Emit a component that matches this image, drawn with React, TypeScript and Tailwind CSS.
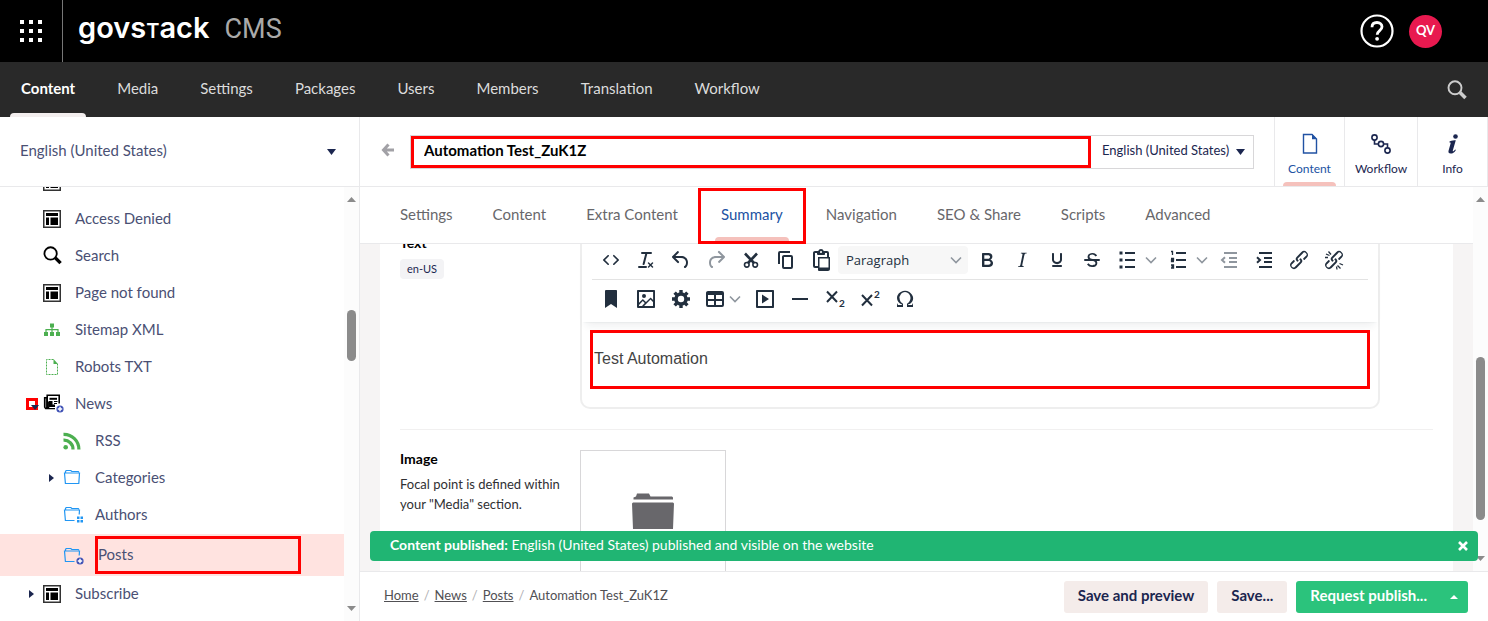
import React from "react";

type IconProps = { className?: string };

const toolPaths = {
  code: "M9.8 15.7c.3.3.3.8 0 1-.3.4-.9.4-1.2 0l-4.4-4.1a.8.8 0 0 1 0-1.2l4.4-4.2c.3-.3.9-.3 1.2 0 .3.3.3.8 0 1.1L6 12l3.8 3.7zM14.2 15.7c-.3.3-.3.8 0 1 .4.4.9.4 1.2 0l4.4-4.1c.3-.3.3-.9 0-1.2l-4.4-4.2a.8.8 0 0 0-1.2 0c-.3.3-.3.8 0 1.1L18 12l-3.8 3.7z",
  clear: "M13.2 6a1 1 0 0 1 0 .2l-2.6 10a1 1 0 0 1-1 .8h-.2a.8.8 0 0 1-.8-1l2.6-10H8a1 1 0 1 1 0-2h9a1 1 0 0 1 0 2h-3.8zM5 18h7a1 1 0 0 1 0 2H5a1 1 0 0 1 0-2zm13 1.5L16.5 18 15 19.5a.7.7 0 0 1-1-1l1.5-1.5-1.5-1.5a.7.7 0 0 1 1-1l1.5 1.5 1.5-1.5a.7.7 0 0 1 1 1L17.5 17l1.5 1.5a.7.7 0 0 1-1 1z",
  undo: "M6.4 8H12c3.7 0 6.2 2 6.8 5.1.6 2.7-.4 5.6-2.3 6.8a1 1 0 0 1-1-1.8c1.1-.6 1.8-2.7 1.4-4.6-.5-2.1-2.1-3.5-4.9-3.5H6.4l3.3 3.3a1 1 0 1 1-1.4 1.4l-5-5a1 1 0 0 1 0-1.4l5-5a1 1 0 0 1 1.4 1.4L6.4 8z",
  redo: "M17.6 10H12c-2.8 0-4.4 1.4-4.9 3.5-.4 2 .3 4 1.4 4.6a1 1 0 1 1-1 1.8c-2-1.2-2.9-4.1-2.3-6.8.6-3 3-5.1 6.8-5.1h5.6l-3.3-3.3a1 1 0 1 1 1.4-1.4l5 5a1 1 0 0 1 0 1.4l-5 5a1 1 0 0 1-1.4-1.4l3.3-3.3z",
  copy: "M16 3H6a2 2 0 0 0-2 2v11h2V5h10V3zm1 4a2 2 0 0 1 2 2v10a2 2 0 0 1-2 2h-7a2 2 0 0 1-2-2V9c0-1.2.9-2 2-2h7zm0 12V9h-7v10h7z",
  paste: "M18 9V5h-2v1c0 .6-.4 1-1 1H9a1 1 0 0 1-1-1V5H6v13h3V9h9zM9 20H6a2 2 0 0 1-2-2V5c0-1.1.9-2 2-2h3.2A3 3 0 0 1 12 1a3 3 0 0 1 2.8 2H18a2 2 0 0 1 2 2v4h1v12c0 1.1-.9 2-2 2h-9a1 1 0 0 1-1-1v-2zm1.5-9.5v9h9v-9h-9zM12 3a1 1 0 0 0-1 1c0 .5.4 1 1 1s1-.5 1-1-.4-1-1-1z",
  bold: "M7.8 19c-.3 0-.5 0-.6-.2l-.2-.5V5.7c0-.2 0-.4.2-.5l.6-.2h5c1.5 0 2.7.3 3.5 1 .7.6 1.1 1.4 1.1 2.5a3 3 0 0 1-.6 1.9c-.4.6-1 1-1.6 1.2.4.1.9.3 1.3.6s.8.7 1 1.2c.4.4.5 1 .5 1.6 0 1.3-.4 2.3-1.3 3-.8.7-2.1 1-3.8 1H7.8zm5-8.3c.6 0 1.2-.1 1.6-.5.4-.3.6-.7.6-1.3 0-1.1-.8-1.7-2.3-1.7H9.3v3.5h3.4zm.5 6c.7 0 1.3-.1 1.7-.4.4-.4.6-.9.6-1.5s-.2-1-.7-1.4c-.4-.3-1-.4-2-.4H9.4v3.8h4z",
  italic: "M16.7 4.7l-.1.9h-.3c-.6 0-1 0-1.4.3-.3.3-.4.6-.5 1.1l-2.1 9.8v.6c0 .5.4.8 1.4.8h.2l-.2.8H8l.2-.8h.2c1.1 0 1.8-.5 2-1.5l2-9.8.1-.5c0-.6-.4-.8-1.4-.8h-.3l.2-.9h5.8z",
  underline: "M16 5c.6 0 1 .4 1 1v5.5a4 4 0 0 1-.4 1.8l-1 1.4a5.3 5.3 0 0 1-5.5 1 5 5 0 0 1-1.6-1c-.5-.4-.8-.9-1.1-1.4a4 4 0 0 1-.4-1.8V6c0-.6.4-1 1-1s1 .4 1 1v5.500c0 .3 0 .6.2 1l.6.7a3.300 3.300 0 0 0 2.200.8 3.400 3.400 0 0 0 2.200-.8c.3-.2.4-.5.6-.8l.2-.9V6c0-.6.4-1 1-1zM8 17h8c.6 0 1 .4 1 1s-.4 1-1 1H8a1 1 0 0 1 0-2z",
  strike: "M15.6 8.5c-.5-.7-1-1.1-1.3-1.3-.6-.4-1.3-.6-2-.6-2.7 0-2.8 1.7-2.8 2.1 0 1.6 1.8 2 3.2 2.3 4.4.9 4.6 2.8 4.6 3.9 0 1.4-.7 4.1-5 4.1A6.2 6.2 0 0 1 7 16.4l1.5-1.1c.4.6 1.6 2 3.7 2 1.6 0 2.5-.4 3-1.2.4-.8.3-2-.8-2.6-.7-.4-1.6-.7-2.9-1-1-.2-3.9-.8-3.9-3.6C7.6 6 10.3 5 12.4 5c2.9 0 4.2 1.6 4.7 2.4l-1.5 1.1zM5 11h14a1 1 0 0 1 0 2H5a1 1 0 0 1 0-2z",
  link: "M6.2 12.3a1 1 0 0 1 1.4 1.4l-2 2a2 2 0 1 0 2.6 2.8l4.8-4.8a1 1 0 0 0 0-1.4 1 1 0 1 1 1.4-1.3 2.9 2.9 0 0 1 0 4L9.6 20a3.9 3.9 0 0 1-5.5-5.5l2-2zm11.6-.6a1 1 0 0 1-1.4-1.4l2.1-2a2 2 0 1 0-2.7-2.8L11 10.3a1 1 0 0 0 0 1.4A1 1 0 1 1 9.6 13a2.9 2.9 0 0 1 0-4L14.4 4a3.9 3.9 0 0 1 5.5 5.5l-2 2z",
  bookmark: "M6 4v17l6-4 6 4V4c0-.6-.4-1-1-1H7a1 1 0 0 0-1 1z",
  image: "M5 15.7l3.3-3.2c.3-.3.7-.3 1 0L12 15l4.1-4c.3-.4.8-.4 1 0l2 1.9V5H5v10.7zM5 18V19h3l2.8-2.9-2-2L5 17.9zm14-3l-2.5-2.4-6.4 6.5H19v-4zM4 3h16c.6 0 1 .4 1 1v16c0 .6-.4 1-1 1H4a1 1 0 0 1-1-1V4c0-.6.4-1 1-1zm6 8a2 2 0 1 0 0-4 2 2 0 0 0 0 4z",
  table: "M19 4a2 2 0 0 1 2 2v12a2 2 0 0 1-2 2H5a2 2 0 0 1-2-2V6c0-1.1.9-2 2-2h14zM5 14v4h6v-4H5zm14 0h-6v4h6v-4zm0-6h-6v4h6V8zM5 12h6V8H5v4z",
  media: "M4 3h16c.6 0 1 .4 1 1v16c0 .6-.4 1-1 1H4a1 1 0 0 1-1-1V4c0-.6.4-1 1-1zm1 2v14h14V5H5zM9 7.500l7 4.500-7 4.500z",
  rule: "M4 11h16v2H4z",
  omega: "M15 18h4l1-2v4h-6v-3.300l1.400-1a6 6 0 0 0 1.800-2.900 6.300 6.300 0 0 0-.1-4.100 5.800 5.800 0 0 0-3-3.200c-.6-.3-1.300-.5-2.100-.5a5.100 5.100 0 0 0-3.900 1.800 6.300 6.300 0 0 0-1.300 6 6.200 6.200 0 0 0 1.800 3l1.400.9V20H4v-4l1 2h4v-.5l-2-1L5.400 15A6.500 6.500 0 0 1 4 11c0-1 .2-1.900.6-2.700A7 7 0 0 1 7.800 5a8.300 8.300 0 0 1 8.500 0c1 .7 1.900 1.500 2.500 2.500a6.600 6.600 0 0 1 .3 7.300 6.800 6.800 0 0 1-2 2l-2.100.7v.5z",
};

function PathIcon({ name }: { name: keyof typeof toolPaths }) {
  return (
    <svg viewBox="0 0 24 24" className="size-6 shrink-0" fill="currentColor" aria-hidden="true">
      <path d={toolPaths[name]} fillRule={name === "strike" ? "nonzero" : "evenodd"} />
    </svg>
  );
}

function Stroke({ children }: { children: React.ReactNode }) {
  return (
    <svg viewBox="0 0 24 24" className="size-6 shrink-0" fill="none" stroke="currentColor" strokeWidth="2" aria-hidden="true">
      {children}
    </svg>
  );
}

function CutIcon() {
  return (
    <Stroke>
      <path d="M6 5.500l9 9.500M18 5.500L9 15" strokeWidth="2.600" />
      <circle cx="7.800" cy="16.800" r="2.300" strokeWidth="1.600" />
      <circle cx="16.200" cy="16.800" r="2.300" strokeWidth="1.600" />
    </Stroke>
  );
}

function GearIcon() {
  return (
    <svg viewBox="0 0 24 24" className="size-6 shrink-0" aria-hidden="true">
      <circle cx="12" cy="12" r="5" fill="none" stroke="currentColor" strokeWidth="3.600" />
      <g stroke="currentColor" strokeWidth="3.400">
        <path d="M12 3v3M12 18v3M3 12h3M18 12h3M5.600 5.600l2.200 2.200M16.200 16.200l2.200 2.200M5.600 18.400l2.200-2.200M16.200 7.800l2.200-2.200" />
      </g>
    </svg>
  );
}

function BulletIcon() {
  return (
    <Stroke>
      <path d="M10 5h10M10 12h10M10 19h10" />
      <path d="M4.500 5h3M4.500 12h3M4.500 19h3" strokeWidth="3" />
    </Stroke>
  );
}

function NumberIcon() {
  return (
    <Stroke>
      <path d="M10 5h10M10 12h10M10 19h10" />
      <path d="M5 3.500h1.500V7M5 10.500h2.500v1.500H5.500v1.500h2.500M5 17h2.500v3H5M5.500 18.500h2" strokeWidth="1.300" />
    </Stroke>
  );
}

function DentIcon({ out }: { out?: boolean }) {
  return (
    <Stroke>
      <path d="M7 5h13M12 10h8M12 14h8M7 19h13" />
      <path d={out ? "M8 9.200L5 12l3 2.800" : "M5 9.200L8 12l-3 2.800"} />
    </Stroke>
  );
}

function UnlinkIcon() {
  return (
    <svg viewBox="0 0 24 24" className="size-6 shrink-0" fill="currentColor" aria-hidden="true">
      <path d={toolPaths.link} />
      <path d="M4 6l3.500 1.500M6.500 3.500L9 6.500M3 9.500l3 0M15.500 17.500l3 3M17.500 15.500l3.500 1.500M14.500 18.500l.5 3" fill="none" stroke="currentColor" strokeWidth="1.300" />
    </svg>
  );
}

function ScriptIcon({ up }: { up?: boolean }) {
  return (
    <svg viewBox="0 0 24 24" className="size-6 shrink-0" aria-hidden="true">
      <path d={up ? "M4 8l10 10.500M14 8L4 18.500" : "M4 4.500L14 15M14 4.500L4 15"} stroke="currentColor" strokeWidth="2" />
      <text x="16" y={up ? 11 : 20} fill="currentColor" className="font-['Lato'] text-[10px] font-bold">2</text>
    </svg>
  );
}

function Chevron() {
  return (
    <svg viewBox="0 0 12 10" className="h-2.5 w-3 shrink-0 text-[#8f969e]" fill="none" stroke="currentColor" strokeWidth="1.600" aria-hidden="true">
      <path d="M1 2.500L6 7.500l5-5" />
    </svg>
  );
}

function Tool({ label, children, muted, menu }: { label: string; children: React.ReactNode; muted?: boolean; menu?: boolean }) {
  return (
    <button
      type="button"
      aria-label={label}
      className={`flex h-[34px] shrink-0 items-center ${menu ? "w-[51px] gap-1.5 pl-1.5" : "w-[35px] justify-center"} ${muted ? "text-[#8f969e]" : "text-[#222f3e]"}`}
    >
      {children}
      {menu && <Chevron />}
    </button>
  );
}

function Triangle({ className, direction }: { className: string; direction: "up" | "down" | "right" }) {
  const d = { up: "M0 6L5 0l5 6z", down: "M0 0h10L5 6z", right: "M0 0l6 5-6 5z" }[direction];
  return (
    <svg viewBox={direction === "right" ? "0 0 6 10" : "0 0 10 6"} preserveAspectRatio="none" className={`shrink-0 ${className}`} fill="currentColor" aria-hidden="true">
      <path d={d} />
    </svg>
  );
}

function LayoutIcon({ className = "" }: IconProps) {
  return (
    <svg viewBox="0 0 18 18" className={`size-[18px] shrink-0 text-black ${className}`} fill="currentColor" aria-hidden="true">
      <path d="M.750.750h16.500v16.500H.750z" fill="none" stroke="#333" strokeWidth="1.500" />
      <path d="M3 3h12v3H3zM3 7.500h3V15H3zM7.500 7.500H15V15H7.500z" />
    </svg>
  );
}

function SearchIcon({ className = "" }: IconProps) {
  return (
    <svg viewBox="0 0 20 20" className={`shrink-0 ${className}`} fill="none" stroke="currentColor" aria-hidden="true">
      <circle cx="8" cy="7.800" r="6.500" strokeWidth="1.900" />
      <path d="M13 12.500l5.500 5.500" strokeWidth="3.600" />
    </svg>
  );
}

function SitemapIcon() {
  return (
    <svg viewBox="0 0 18 18" className="size-[18px] shrink-0 text-[#4caf50]" fill="currentColor" aria-hidden="true">
      <path d="M7 2.500h4v4H7zM1 11h4v4H1zM7 11h4v4H7zM13 11h4v4h-4z" />
      <path d="M9 6v5M3 11V8.700h12V11" fill="none" stroke="currentColor" strokeWidth="1.200" />
    </svg>
  );
}

function DottedPageIcon() {
  return (
    <svg viewBox="0 0 18 18" className="size-[18px] shrink-0 text-[#4caf50]" fill="none" stroke="currentColor" aria-hidden="true">
      <path d="M10.500 1.500H3.500v15h11V6" strokeDasharray="2 1" />
      <path d="M10.500 1v5H15z" fill="currentColor" stroke="none" />
    </svg>
  );
}

function PlusBadge() {
  return (
    <g>
      <circle cx="17" cy="15" r="3.600" fill="#3f51b5" stroke="none" />
      <path d="M17 12.800v4.400M14.800 15h4.400" stroke="#fff" strokeWidth="1.500" />
    </g>
  );
}

function NewsIcon() {
  return (
    <svg viewBox="0 0 21 19" className="h-[19px] w-[21px] shrink-0" fill="none" stroke="#000" aria-hidden="true">
      <path d="M16.200 9.500V1.200H4.200V13" strokeWidth="1.600" />
      <path d="M4 3.800H1.600V13l1 1.600H12" strokeWidth="1.400" />
      <path d="M6.500 4.800h7.500" strokeWidth="2" />
      <path d="M5.500 7h4v3.500H12v2.500H5.500z" fill="#000" stroke="none" />
      <path d="M3.200 4v9.500h2.500V8" strokeWidth="1.200" />
      <path d="M11 7.500h3.500M11 9.500h3" strokeWidth="1" />
      <PlusBadge />
    </svg>
  );
}

function RssIcon() {
  return (
    <svg viewBox="0 0 18 18" className="size-[18px] shrink-0 text-[#4caf50]" fill="none" stroke="currentColor" strokeWidth="3.200" aria-hidden="true">
      <path d="M.500 2.300A15 15 0 0 1 15.900 17.500M.500 8.200a9 9 0 0 1 9.500 9.300" />
      <circle cx="2.700" cy="15.200" r="2.300" fill="currentColor" stroke="none" />
    </svg>
  );
}

function FolderIcon({ badge }: { badge?: "grid" | "plus" }) {
  return (
    <svg viewBox="0 0 21 19" className="h-[19px] w-[21px] shrink-0" fill="none" stroke="#2196f3" aria-hidden="true">
      <path d={badge ? "M11.500 15.500H2.400L1.500 5H16.500l-.3 4.500" : "M1.500 5H16.500l-.7 10.500H2.400z"} strokeWidth="1.200" />
      <path d="M2.500 5V3.300L3.300 2.500h4.500l1 1h6.500l.6.800" strokeWidth="1.200" />
      {badge === "grid" && <path d="M14 11.500h2.500V14H14zM17.500 11.500H20V14h-2.500zM14 15h2.500v2.500H14zM17.500 15H20v2.500h-2.500z" fill="#2196f3" stroke="none" />}
      {badge === "plus" && <PlusBadge />}
    </svg>
  );
}

function TreeRow({ label, icon, nested, arrow }: { label: string; icon: React.ReactNode; nested?: boolean; arrow?: boolean }) {
  return (
    <li className={`flex h-[37px] items-center pb-0.5 ${nested ? "pl-[49px]" : "pl-[29px]"}`}>
      <span className="flex w-3.5 shrink-0">{arrow && <Triangle direction="right" className="h-2 w-[5px] text-[#1b264f]" />}</span>
      <span className="flex w-8 shrink-0">{icon}</span>
      <a href="#" className="text-[15px]">{label}</a>
    </li>
  );
}

function Scrollbar({ top, thumb, bottom }: { top: string; thumb: string; bottom: string }) {
  return (
    <div className="flex w-[15px] shrink-0 flex-col items-center bg-[#fcfcfc] text-[#8b8b8b]" aria-hidden="true">
      <Triangle direction="up" className="mt-2.5 h-[5px] w-[9px]" />
      <div className={top} />
      <div className={`w-[9px] shrink-0 rounded-full bg-[#8b8b8b] ${thumb}`} />
      <div className="flex-1" />
      <Triangle direction="down" className={`h-[5px] w-[9px] ${bottom}`} />
    </div>
  );
}

function EditorApp({ label, active, width, children }: { label: string; active?: boolean; width: string; children: React.ReactNode }) {
  return (
    <button type="button" className={`flex flex-col items-center border-l border-[#e9e9eb] ${width} ${active ? "text-[#2152a3]" : "text-[#1b264f]"}`}>
      <span className="mt-4 flex h-[22px] items-center">{children}</span>
      <span className="mt-1.5 text-xs">{label}</span>
      {active && <span className="mt-auto h-1 w-[53px] rounded-t bg-[#f5c1bc]" />}
    </button>
  );
}

const sections = ["Content", "Media", "Settings", "Packages", "Users", "Members", "Translation", "Workflow"];
const tabs = ["Settings", "Content", "Extra Content", "Summary", "Navigation", "SEO & Share", "Scripts", "Advanced"];

export default function App() {
  return (
    <div className="flex h-screen flex-col overflow-hidden bg-white font-['Lato',sans-serif] text-[15px] text-[#4a5074]">
      <header className="flex h-[62px] shrink-0 items-center bg-black">
        <button type="button" aria-label="Applications" className="flex h-full w-[63px] items-center justify-center border-r border-[#777]">
          <svg viewBox="0 0 22 22" className="size-[22px]" fill="#fff" aria-hidden="true">
            <path d="M0 0h4v4H0zM9 0h4v4H9zM18 0h4v4h-4zM0 9h4v4H0zM9 9h4v4H9zM18 9h4v4h-4zM0 18h4v4H0zM9 18h4v4H9zM18 18h4v4h-4z" />
          </svg>
        </button>
        <a href="#" className="ml-[15px] flex items-baseline gap-[15px] pb-1 leading-9">
          <span className="font-['Inter',sans-serif] text-[29px] font-semibold text-white">
            govs<span className="text-[20px] uppercase">t</span>ack
          </span>
          <span className="font-['Roboto',sans-serif] text-[27px] text-[#a9a9a9]">CMS</span>
        </a>
        <button type="button" aria-label="Help" className="ml-auto">
          <svg viewBox="0 0 34 34" className="size-[34px]" fill="none" stroke="#fff" aria-hidden="true">
            <circle cx="17" cy="17" r="15.500" strokeWidth="2.200" />
            <path d="M12 13.200c0-3 2-4.700 5-4.700s5 1.800 5 4.300c0 4-4.800 3.700-4.800 8" strokeWidth="2.800" />
            <circle cx="17.100" cy="24.800" r="1.900" fill="#fff" stroke="none" />
          </svg>
        </button>
        <button type="button" aria-label="Account" className="mr-[46px] ml-[15px] size-[33px] rounded-full bg-[#e8194f] text-[13px] font-bold text-white">QV</button>
      </header>

      <nav className="flex h-[55px] shrink-0 items-stretch bg-[#292929] text-[#dcdcdc]">
        <ul className="flex">
          {sections.map((s, i) => (
            <li key={s} className="flex">
              <a href="#" className={`relative flex items-center px-[21px] pb-0.5 ${i === 0 ? "font-bold text-white" : ""}`}>
                {s}
                {i === 0 && <span className="absolute inset-x-2.5 bottom-0 h-1 rounded-t bg-[#f3eeee]" />}
              </a>
            </li>
          ))}
        </ul>
        <button type="button" aria-label="Search" className="mr-[21px] ml-auto text-[#ccc]">
          <SearchIcon className="size-5" />
        </button>
      </nav>

      <div className="flex min-h-0 flex-1">
        <aside className="flex w-[360px] shrink-0 flex-col border-r border-[#e9e9eb]">
          <button type="button" className="flex h-[70px] shrink-0 items-center justify-between border-b border-[#e9e9eb] pr-[23px] pb-0.5 pl-5">
            English (United States)
            <Triangle direction="down" className="mt-0.5 h-1.5 w-[9px] text-[#1b264f]" />
          </button>
          <div className="flex min-h-0 flex-1">
            <ul className="min-w-0 flex-1 overflow-hidden">
              <li className="flex h-3.5 items-end overflow-hidden pb-2.5 pl-[43px]">
                <LayoutIcon />
              </li>
              <TreeRow label="Access Denied" icon={<LayoutIcon />} />
              <TreeRow label="Search" icon={<SearchIcon className="size-[19px] text-black" />} />
              <TreeRow label="Page not found" icon={<LayoutIcon />} />
              <TreeRow label="Sitemap XML" icon={<SitemapIcon />} />
              <TreeRow label="Robots TXT" icon={<DottedPageIcon />} />
              <li className="flex h-[37px] items-center pb-0.5 pl-[26px]">
                <button type="button" aria-label="Collapse News" className="mr-[5px] flex size-3 border-[3px] border-[#f00]">
                  <Triangle direction="down" className="mt-1 ml-0.5 h-[5px] w-2 text-[#1b264f]" />
                </button>
                <span className="flex w-8 shrink-0"><NewsIcon /></span>
                <a href="#">News</a>
              </li>
              <TreeRow label="RSS" icon={<RssIcon />} nested />
              <TreeRow label="Categories" icon={<FolderIcon />} nested arrow />
              <TreeRow label="Authors" icon={<FolderIcon badge="grid" />} nested />
              <li className="flex h-[42px] items-center bg-[#ffe3e0] pl-[63px]">
                <span className="flex w-8 shrink-0"><FolderIcon badge="plus" /></span>
                <a href="#" className="flex h-[38px] w-[206px] items-center border-[3px] border-[#f00] pb-0.5">Posts</a>
              </li>
              <TreeRow label="Subscribe" icon={<LayoutIcon />} arrow />
            </ul>
            <Scrollbar top="h-[108px] shrink-0" thumb="h-[51px]" bottom="mb-2.5" />
          </div>
        </aside>

        <main className="relative flex min-w-0 flex-1 flex-col">
          <div className="flex h-[70px] shrink-0 border-b border-r border-[#e9e9eb]">
            <button type="button" aria-label="Back" className="ml-[21px] self-center pb-1 text-[#a2a1a6]">
              <svg viewBox="0 0 13 14" className="h-3.5 w-[13px]" fill="none" stroke="currentColor" strokeWidth="3" aria-hidden="true">
                <path d="M7.500 1.500L2.500 7l5 5.500M2.500 7H13" />
              </svg>
            </button>
            <div className="mt-[18px] mr-5 ml-4 flex h-[34px] flex-1 border border-[#d8d7d9]">
              <input aria-label="Name" defaultValue="Automation Test_ZuK1Z" className="h-8 min-w-0 flex-1 border-[3px] border-[#f00] px-2.5 pb-1 font-bold text-black outline-none" />
              <div className="relative flex w-[162px] items-center">
                <select aria-label="Language" className="h-full w-full appearance-none bg-white pb-0.5 pl-[11px] text-[13px] text-[#1b264f] outline-none">
                  <option>English (United States)</option>
                </select>
                <Triangle direction="down" className="pointer-events-none absolute right-2 h-1.5 w-[9px] text-[#1b264f]" />
              </div>
            </div>
            <EditorApp label="Content" active width="w-[70px]">
              <svg viewBox="0 0 16 22" className="h-[22px] w-4" fill="none" stroke="currentColor" strokeWidth="1.400" aria-hidden="true">
                <path d="M10 1.500H1.500v18.500h13V6z" />
                <path d="M10 1v5.200h5z" fill="currentColor" stroke="none" />
              </svg>
            </EditorApp>
            <EditorApp label="Workflow" width="w-[73px]">
              <svg viewBox="0 0 20 20" className="size-5" fill="none" stroke="currentColor" strokeWidth="1.600" aria-hidden="true">
                <circle cx="3.500" cy="3.500" r="2.600" />
                <circle cx="10" cy="10" r="2.600" />
                <circle cx="16.500" cy="16.500" r="2.600" />
                <path d="M3.500 6v4h4M12.500 10h4v4" />
              </svg>
            </EditorApp>
            <EditorApp label="Info" width="w-[70px]">
              <svg viewBox="0 0 12 20" className="h-5 w-3" fill="currentColor" aria-hidden="true">
                <circle cx="8.500" cy="2.500" r="2.300" />
                <path d="M3 7.300c2-.8 4-1 5.800-1L5.800 16.400c-.2 1 .4 1 1 .5l1.400-1.500.7.600C7.400 18.600 5.600 19.600 3.700 19.600c-2 0-2.600-1.200-2.100-3l2-7.200c.2-.9-.2-1.200-1.700-1.200z" />
              </svg>
            </EditorApp>
          </div>

          <div className="flex min-h-0 flex-1">
            <div className="flex min-w-0 flex-1 flex-col">
              <div role="tablist" className="flex h-[57px] shrink-0 border-b border-[#e9e9eb] pl-5 text-[#68676b]">
                {tabs.map((t) =>
                  t === "Summary" ? (
                    <button key={t} type="button" role="tab" aria-selected="true" className="relative z-10 mt-px -mb-px flex w-[108px] items-center justify-center border-[3px] border-[#f00] pb-1 text-[#2152a3]">
                      {t}
                      <span className="absolute inset-x-3.5 bottom-0 h-1 rounded-t bg-[#f5c1bc]" />
                    </button>
                  ) : (
                    <button key={t} type="button" role="tab" aria-selected="false" className="px-5 pb-0.5">{t}</button>
                  ),
                )}
              </div>
              <div className="min-h-0 flex-1 overflow-hidden bg-[#f6f4f4] px-5">
                <div className="h-full overflow-hidden bg-white px-5">
                  <section className="flex h-[186px] border-b border-[#f1f0f0]">
                    <div className="w-[180px] shrink-0">
                      <h3 className="-mt-[11px] text-sm leading-5 font-bold text-black">Text</h3>
                      <span className="mt-1.5 inline-block rounded-sm bg-[#f3f3f5] px-[7px] text-[11px] leading-5 text-[#1b264f]">en-US</span>
                    </div>
                    <div className="h-[165px] w-[800px] rounded-b-[10px] border-2 border-t-0 border-[#eee]">
                      <div className="px-2.5 shadow-[0_2px_2px_-2px_rgba(34,47,62,0.1),0_8px_8px_-4px_rgba(34,47,62,0.07)]">
                        <div className="flex h-9 items-center border-b border-[#e3e3e3] pb-1 pl-px">
                          <Tool label="Source code"><PathIcon name="code" /></Tool>
                          <Tool label="Clear formatting"><PathIcon name="clear" /></Tool>
                          <Tool label="Undo"><PathIcon name="undo" /></Tool>
                          <Tool label="Redo" muted><PathIcon name="redo" /></Tool>
                          <Tool label="Cut"><CutIcon /></Tool>
                          <Tool label="Copy"><PathIcon name="copy" /></Tool>
                          <Tool label="Paste"><PathIcon name="paste" /></Tool>
                          <div className="relative flex h-7 w-[131px] shrink-0 items-center pr-px">
                            <select aria-label="Block format" className="h-7 w-full appearance-none rounded-sm bg-[#f7f7f7] pt-0.5 pl-2 font-['Open_Sans',sans-serif] text-[13px] text-[#222f3e] outline-none">
                              <option>Paragraph</option>
                            </select>
                            <span className="pointer-events-none absolute right-[7px]"><Chevron /></span>
                          </div>
                          <Tool label="Bold"><PathIcon name="bold" /></Tool>
                          <Tool label="Italic"><PathIcon name="italic" /></Tool>
                          <Tool label="Underline"><PathIcon name="underline" /></Tool>
                          <Tool label="Strikethrough"><PathIcon name="strike" /></Tool>
                          <Tool label="Bullet list" menu><BulletIcon /></Tool>
                          <Tool label="Numbered list" menu><NumberIcon /></Tool>
                          <Tool label="Decrease indent" muted><DentIcon out /></Tool>
                          <Tool label="Increase indent"><DentIcon /></Tool>
                          <Tool label="Insert link"><PathIcon name="link" /></Tool>
                          <Tool label="Remove link"><UnlinkIcon /></Tool>
                        </div>
                        <div className="flex h-[42px] items-center pb-1 pl-px">
                          <Tool label="Anchor"><PathIcon name="bookmark" /></Tool>
                          <Tool label="Image"><PathIcon name="image" /></Tool>
                          <Tool label="Macro"><GearIcon /></Tool>
                          <button type="button" aria-label="Table" className="flex h-[34px] w-[49px] shrink-0 items-center pl-[5px] text-[#222f3e]">
                            <PathIcon name="table" />
                            <span className="ml-0.5"><Chevron /></span>
                          </button>
                          <Tool label="Embed"><PathIcon name="media" /></Tool>
                          <Tool label="Horizontal line"><PathIcon name="rule" /></Tool>
                          <Tool label="Subscript"><ScriptIcon /></Tool>
                          <Tool label="Superscript"><ScriptIcon up /></Tool>
                          <Tool label="Special character"><PathIcon name="omega" /></Tool>
                        </div>
                      </div>
                      <div role="textbox" aria-label="Text" className="relative mx-2 mt-2 flex h-[59px] items-center border-[3px] border-[#f00] bg-white px-px pb-0.5 font-['Liberation_Sans',sans-serif] text-base text-[#444]">
                        Test Automation
                      </div>
                    </div>
                  </section>
                  <section className="flex pt-5">
                    <div className="w-[180px] shrink-0">
                      <h3 className="-mt-px text-sm leading-5 font-bold text-black">Image</h3>
                      <p className="mt-[5px] pr-4 text-[13px] leading-5 text-[#303033]">Focal point is defined within your "Media" section.</p>
                    </div>
                    <button type="button" aria-label="Choose image" className="flex h-[146px] w-[146px] justify-center border border-[#d8d7d9] pt-[42px]">
                      <svg viewBox="0 0 42 36" className="h-9 w-[42px]" fill="#68676b" aria-hidden="true">
                        <path d="M1.500 6.500V4.500L4 3.500 5 .5h12l1.500 3H40l1 1v2zM0 10.500l1-1h40l1 1-1 25.500H1z" />
                      </svg>
                    </button>
                  </section>
                </div>
              </div>
            </div>
            <Scrollbar top="h-[155px] shrink-0" thumb="h-[163px]" bottom="mb-2.5" />
          </div>

          <div role="status" className="absolute inset-x-2.5 bottom-[60px] flex h-[30px] items-center rounded-sm bg-[#20b573] pr-2.5 pl-5 text-sm text-white">
            <p className="pb-0.5"><strong className="font-bold">Content published:</strong> English (United States) published and visible on the website</p>
            <button type="button" aria-label="Close" className="ml-auto">
              <svg viewBox="0 0 10 10" className="size-2.5" stroke="#fff" strokeWidth="2.600" aria-hidden="true">
                <path d="M1 1l8 8M9 1L1 9" />
              </svg>
            </button>
          </div>

          <footer className="flex h-[50px] shrink-0 items-center border-t border-[#e9e9eb] pr-5 pl-6">
            <nav aria-label="Breadcrumb" className="flex gap-[5px] pb-0.5 text-[13px] text-[#515054]">
              <a href="#" className="underline">Home</a>
              <span className="text-[#b0afb3]">/</span>
              <a href="#" className="underline">News</a>
              <span className="text-[#b0afb3]">/</span>
              <a href="#" className="underline">Posts</a>
              <span className="text-[#b0afb3]">/</span>
              <span>Automation Test_ZuK1Z</span>
            </nav>
            <div className="ml-auto flex h-8 gap-[9px] font-bold text-[#1b264f]">
              <button type="button" className="rounded-[3px] bg-[#f4ecea] px-3.5 pb-0.5">Save and preview</button>
              <button type="button" className="rounded-[3px] bg-[#f4ecea] px-3.5 pb-0.5">Save...</button>
              <div className="flex rounded-[3px] bg-[#2bc37c] text-white">
                <button type="button" className="pb-0.5 pl-3.5">Request publish...</button>
                <button type="button" aria-label="More publishing options" className="flex w-[41px] items-center justify-end pr-2.5">
                  <Triangle direction="up" className="h-1 w-2" />
                </button>
              </div>
            </div>
          </footer>
        </main>
      </div>
    </div>
  );
}
